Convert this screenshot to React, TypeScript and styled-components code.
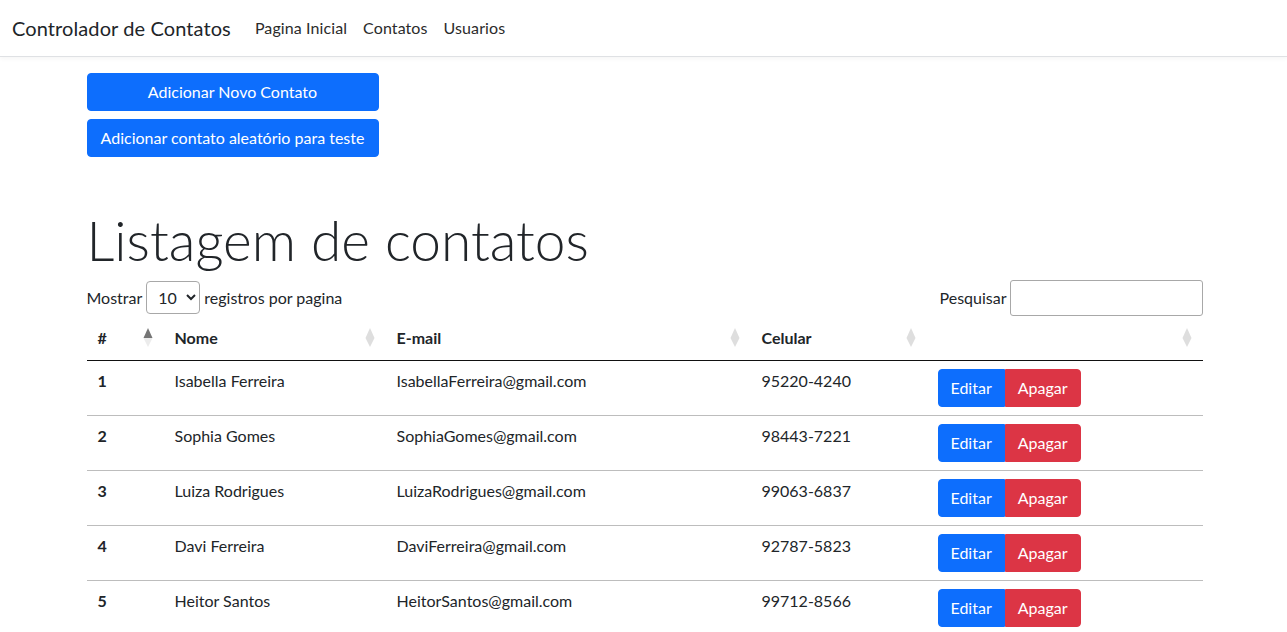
import React from "react";
import styled, { createGlobalStyle } from "styled-components";

const GlobalStyle = createGlobalStyle`
  * { box-sizing: border-box; }
  body {
    margin: 0;
    background: #fff;
    color: #212529;
    font-family: "Lato", "Liberation Sans", sans-serif;
    font-size: 16px;
    line-height: 1.5;
  }
`;

const NavBar = styled.nav`
  display: flex;
  align-items: center;
  height: 57px;
  padding: 0 12px;
  background: #fff;
  border-bottom: 1px solid #dfe1e4;
  box-shadow: 0 2px 4px rgba(0, 0, 0, 0.04);
`;

const Brand = styled.a`
  font-size: 20px;
  line-height: 30px;
  letter-spacing: 0.1px;
  color: #212529;
  margin-right: 16px;
  text-decoration: none;
`;

const NavLinks = styled.div`
  display: flex;
`;

const NavLink = styled.a`
  padding: 8px;
  line-height: 24px;
  letter-spacing: 0.1px;
  color: #2b2b2b;
  text-decoration: none;
`;

const Main = styled.main`
  max-width: 1116px;
  margin: 0 auto;
  padding-top: 16px;
  transform: translateX(1px);
`;

const ButtonStack = styled.div`
  display: flex;
  flex-direction: column;
  gap: 8px;
  width: 292px;
`;

const PrimaryButton = styled.button`
  height: 38px;
  padding: 6px 12px;
  border: 1px solid #0d6efd;
  border-radius: 4px;
  background: #0d6efd;
  color: #fff;
  font-family: inherit;
  font-size: 16px;
  line-height: 24px;
  cursor: pointer;
`;

const Title = styled.h1`
  margin: 50px 0 0;
  font-size: 55px;
  font-weight: 300;
  line-height: 1.2;
  color: #212529;
`;

const Controls = styled.div`
  display: flex;
  align-items: center;
  justify-content: space-between;
  margin-top: 7px;
  height: 36px;
`;

const Label = styled.label`
  display: flex;
  align-items: center;
  gap: 4px;
  color: #212529;
`;

const PageSelect = styled.select`
  width: 54px;
  height: 33px;
  margin-top: -2px;
  padding: 0 4px 0 7px;
  border: 1px solid #a8a8a8;
  border-radius: 4px;
  background: #fff;
  color: #212529;
  font-family: inherit;
  font-size: 16px;
`;

const SearchInput = styled.input`
  width: 193px;
  height: 36px;
  margin-left: -1px;
  border: 1px solid #a8a8a8;
  border-radius: 3px;
  padding: 4px;
  font-family: inherit;
  font-size: 16px;
`;

const Table = styled.table`
  width: 100%;
  margin-top: 4px;
  border-collapse: collapse;
  table-layout: fixed;
`;

const HeadCell = styled.th`
  position: relative;
  height: 40px;
  padding: 6px 11px 10px;
  line-height: 24px;
  text-align: left;
  font-weight: 700;
  border-bottom: 1px solid #111;
`;

const SortIcon = styled.svg`
  position: absolute;
  right: 11px;
  top: 8px;
`;

const Row = styled.tr`
  border-bottom: 1px solid #bdbdbd;
`;

const Cell = styled.td<{ $bold?: boolean }>`
  padding: 8px 11px;
  line-height: 24px;
  vertical-align: top;
  font-weight: ${(p) => (p.$bold ? 700 : 400)};
  height: 54px;
`;

const ButtonGroup = styled.div`
  display: inline-flex;
`;

const GroupButton = styled.button<{ $variant: "edit" | "delete" }>`
  height: 38px;
  padding: 6px 12px;
  border: 1px solid ${(p) => (p.$variant === "edit" ? "#0d6efd" : "#dc3545")};
  background: ${(p) => (p.$variant === "edit" ? "#0d6efd" : "#dc3545")};
  color: #fff;
  font-family: inherit;
  font-size: 16px;
  line-height: 24px;
  border-radius: ${(p) => (p.$variant === "edit" ? "4px 0 0 4px" : "0 4px 4px 0")};
  cursor: pointer;
`;

function Sort({ active }: { active?: boolean }) {
  return (
    <SortIcon width="10" height="20" viewBox="0 0 10 20">
      <polygon points="5,0 9.5,10 0.5,10" fill={active ? "#757575" : "#dedede"} />
      <polygon points="0.5,10 9.5,10 5,19" fill={active ? "#ececec" : "#dedede"} />
    </SortIcon>
  );
}

const contacts = [
  { id: 1, name: "Isabella Ferreira", email: "IsabellaFerreira@gmail.com", phone: "95220-4240" },
  { id: 2, name: "Sophia Gomes", email: "SophiaGomes@gmail.com", phone: "98443-7221" },
  { id: 3, name: "Luiza Rodrigues", email: "LuizaRodrigues@gmail.com", phone: "99063-6837" },
  { id: 4, name: "Davi Ferreira", email: "DaviFerreira@gmail.com", phone: "92787-5823" },
  { id: 5, name: "Heitor Santos", email: "HeitorSantos@gmail.com", phone: "99712-8566" },
];

const columns = [
  { label: "#", width: 77, active: true },
  { label: "Nome", width: 222 },
  { label: "E-mail", width: 365 },
  { label: "Celular", width: 176 },
  { label: "", width: 276 },
];

export default function App() {
  return (
    <>
      <GlobalStyle />
      <NavBar>
        <Brand href="#">Controlador de Contatos</Brand>
        <NavLinks>
          <NavLink href="#">Pagina Inicial</NavLink>
          <NavLink href="#">Contatos</NavLink>
          <NavLink href="#">Usuarios</NavLink>
        </NavLinks>
      </NavBar>
      <Main>
        <ButtonStack>
          <PrimaryButton>Adicionar Novo Contato</PrimaryButton>
          <PrimaryButton>Adicionar contato aleatório para teste</PrimaryButton>
        </ButtonStack>
        <Title>Listagem de contatos</Title>
        <Controls>
          <Label>
            Mostrar
            <PageSelect defaultValue="10">
              <option>10</option>
              <option>25</option>
              <option>50</option>
              <option>100</option>
            </PageSelect>
            registros por pagina
          </Label>
          <Label>
            Pesquisar
            <SearchInput type="search" />
          </Label>
        </Controls>
        <Table>
          <colgroup>
            {columns.map((c, i) => (
              <col key={i} width={c.width} />
            ))}
          </colgroup>
          <thead>
            <tr>
              {columns.map((c, i) => (
                <HeadCell key={i}>
                  {c.label}
                  <Sort active={c.active} />
                </HeadCell>
              ))}
            </tr>
          </thead>
          <tbody>
            {contacts.map((c) => (
              <Row key={c.id}>
                <Cell $bold>{c.id}</Cell>
                <Cell>{c.name}</Cell>
                <Cell>{c.email}</Cell>
                <Cell>{c.phone}</Cell>
                <Cell>
                  <ButtonGroup>
                    <GroupButton $variant="edit">Editar</GroupButton>
                    <GroupButton $variant="delete">Apagar</GroupButton>
                  </ButtonGroup>
                </Cell>
              </Row>
            ))}
          </tbody>
        </Table>
      </Main>
    </>
  );
}
